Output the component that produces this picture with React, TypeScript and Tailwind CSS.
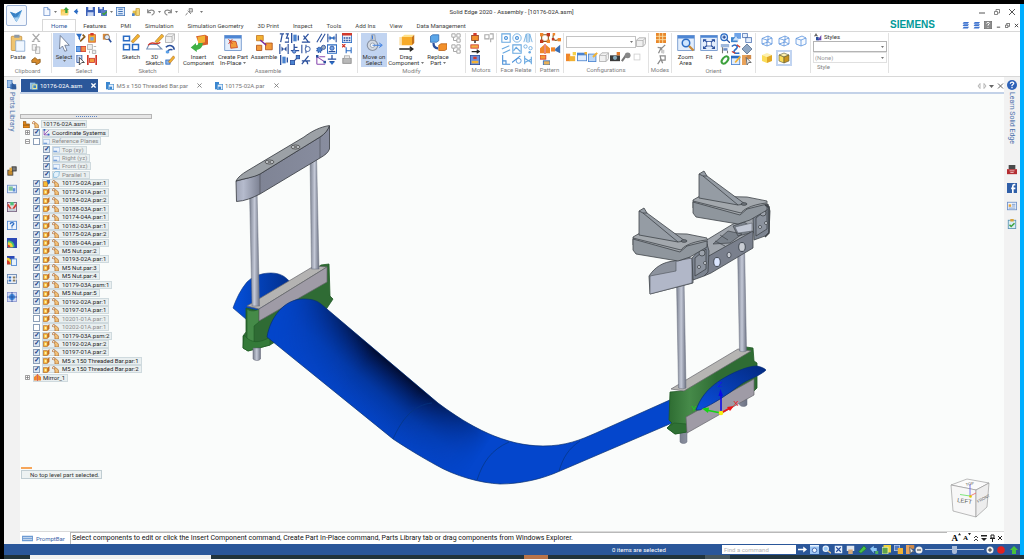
import type { ReactNode } from "react";

const BLUE = "#2b6cc4";
const NAVY = "#2a4f9c";
const GOLD = "#f2b233";
const RED = "#d2392b";
const GRAY = "#a9a9a9";

function line(d: string, stroke = BLUE, w = 1.3) {
  return <path d={d} stroke={stroke} strokeWidth={w} fill="none" />;
}

function box(x: number, y: number, w: number, h: number, fill: string, stroke = "none") {
  return <rect x={x} y={y} width={w} height={h} fill={fill} stroke={stroke} />;
}

// every glyph lives on a 12 x 12 grid
const GLYPHS: Record<string, ReactNode> = {
  newDoc: <path d="M2.500.5h5l3 3v8h-8zM7.500.5v3h3" fill="#f4f8ff" stroke="#5d86c4" />,
  open: <>{box(1, 3, 10, 8, "#f5c24a")}<path d="M1 11l2-5h9l-2 5z" fill="#fbd97a" /><path d="M5 4l3-4 4 4h-2v4H7V4z" fill="#3da13d" /></>,
  back: <path d="M9 1L3 6l6 5V8l2-2-2-2z" fill={BLUE} />,
  save: <>{box(0, 0, 12, 12, "#3d62b8")}{box(3, 0, 6, 4, "#e8eefb")}{box(2, 7, 8, 5, "#c9d7f4")}</>,
  saveAll: <>{box(0, 0, 8, 8, "#3d62b8")}{box(2, 0, 4, 3, "#e8eefb")}{box(4, 4, 8, 8, "#5b7bc9")}{line("M6 8l2 2 4-4", "#3da13d", 2)}</>,
  list: <>{box(0.5, 0.5, 11, 11, "#dfeafb", "#3a6fb5")}{line("M3 3h6M3 6h6M3 9h6", "#3a6fb5")}</>,
  palette: <>{box(1, 4, 5, 7, "#e6c14a")}{box(6, 1, 5, 10, "#f2d77c", "#b8902c")}{box(0, 8, 4, 4, "#4a83d0")}</>,
  undo: <path d="M1 2v5h5M1 7c2-5 9-5 10-1 0 3-2 4-4 5" stroke="#8b8b8b" strokeWidth="1.800" fill="none" />,
  redo: <path d="M11 2v5H6M11 7C9 2 2 2 1 6c0 3 2 4 4 5" stroke="#8b8b8b" strokeWidth="1.800" fill="none" />,
  pin: <path d="M1 11l3-4M4 4l5 5M6 1h5v5H7z" stroke="#8b8b8b" strokeWidth="1.500" fill="#ddd" />,
  cut: <path d="M2 1l7 8M10 1L3 9M1 10h3M8 10h3" stroke={GRAY} strokeWidth="1.600" fill="none" />,
  copy: <path d="M1.500.5h5v7h-5zM5.500 3.500h5v8h-5z" fill="#f1f1f1" stroke={GRAY} />,
  painter: <path d="M1 6l4-3 3 3 3-1v4L6 12V9H1z" fill="#d68a2b" stroke="#8b5c1d" />,
  filter: <><path d="M0 1h7L5 5v4L3 7V5z" fill={BLUE} />{line("M5 10l6-6M8 2l3 3", "#8b5c1d", 2)}</>,
  part: <>{box(2, 2, 8, 9, GOLD, "#d0552b")}{box(4, 0, 4, 3, RED)}{box(4, 5, 4, 4, "#6fa4e8")}</>,
  partLink: <>{box(0, 3, 6, 6, "#6fa4e8", BLUE)}{box(6, 3, 6, 6, "#f28c4a", RED)}</>,
  gray2: <path d="M.5.500h6v6h-6zM6.500 7.500h4v4h-4zM8 3h3M3 8v3" fill="#eee" stroke={GRAY} />,
  curMag: <><path d="M1 1h7v7H1z" fill="#d98a3a" /><circle cx="6" cy="5" r="3" fill="#dceafc" stroke="#8a6a4a" />{line("M8 7l3 4", NAVY, 2)}</>,
  arrowSel: <><path d="M1 0h6v9H1z" fill="#cfe0f8" stroke={NAVY} /><path d="M4 3l6 6H7l-3 3z" fill="#fff" stroke="#333" /></>,
  measure: <>{line("M1 0v12M11 0v12", RED, 2)}{box(3, 4, 6, 5, "#f29a3a", RED)}</>,
  cubeGray: <path d="M.5 4l3-3h8v7l-3 3.500h-8zM.5 4h8l3-3M8.500 4v7" fill="#f0f0f0" stroke={GRAY} />,
  sweep: <>{line("M1 4c4-4 10-2 10 3M3 11c0-4 3-5 6-4", NAVY, 1.8)}{box(1, 8, 4, 3, "#58a0e8")}</>,
  pencil: <>{box(1, 6, 5, 5, "#8fb7ea", BLUE)}<path d="M4 8l6-7 2 2-6 7z" fill={GOLD} stroke="#a05c1d" strokeWidth=".6" /></>,
  mate: <>{line("M1 1h5M4 1L2 11M8 1h3l-2 5h3v5H7", NAVY, 1.5)}</>,
  align: <>{line("M2 0v12", NAVY, 1.6)}{box(4, 2, 4, 8, "#4a83d0")}{line("M10 3v6", NAVY, 1.6)}</>,
  axial: <>{line("M1 11h10M3 8l6-7M3 3l6 8", NAVY, 1.5)}</>,
  insertRel: <>{line("M1 0v12M11 0v12", NAVY, 1.4)}<path d="M3 3l3 3-3 3zM9 3L6 6l3 3z" fill={NAVY} /></>,
  tangent: <>{line("M5 0v8M1 8h10M5 4h4", NAVY, 1.5)}<circle cx="5" cy="9" r="2" fill="#77a5e6" stroke={NAVY} /></>,
  cam: <>{line("M1 1v10M6 1v10", NAVY)}<circle cx="8" cy="6" r="3" fill="#fff" stroke={NAVY} /></>,
  connect: <>{box(0.5, 6.5, 5, 5, "#4a83d0", NAVY)}{box(7.5, 0.5, 4, 4, "#4a83d0", NAVY)}{line("M5 7l3-3", NAVY)}</>,
  angle: <>{line("M1 11L9 1M1 7h10M5 7c2 0 3 2 3 4", NAVY, 1.5)}</>,
  parallel: <>{line("M1 11L7 1M5 11l6-10", NAVY)}</>,
  distance: <>{line("M1 1v10M11 1v10M2 6h8", NAVY)}<path d="M3 3l3 3-3 3zM9 3L6 6l3 3z" fill={BLUE} /></>,
  gear: <><circle cx="4" cy="7" r="3" fill="#4a83d0" stroke={NAVY} strokeWidth="1.500" strokeDasharray="1.500 1" /><circle cx="9" cy="4" r="2.500" fill="#9ab" stroke={NAVY} /></>,
  center: <>{line("M.5 1h11v10H.5z", BLUE)}<circle cx="6" cy="5" r="2.500" fill="#77a5e6" stroke={NAVY} />{line("M2 9h8", NAVY)}</>,
  path: <>{line("M1 11h10M1 11V2l9 6M4 2h7", "#8a4bb0")}{box(0, 0, 3, 3, NAVY)}{box(9, 7, 3, 3, NAVY)}</>,
  ground: <>{line("M1 5h10M3 8h6M6 0v5", NAVY, 1.5)}<path d="M3 8h6l-3 4z" fill={BLUE} /></>,
  table: <>{box(0.5, 1.5, 11, 10, "#eaf1fb", BLUE)}{box(0, 0, 12, 3, RED)}{line("M2 6h2M5 6h2M8 6h2M2 9h2M5 9h2M8 9h2", NAVY, 1.6)}</>,
  relRed: <>{line("M5 4v7M11 4v7M5 8h6", BLUE)}{line("M0 0l4 4M4 0L0 4", RED, 1.5)}</>,
  print: <>{box(1, 4, 10, 6, "#b9b9b9", "#8b8b8b")}{box(3, 1, 6, 3, "#eee", GRAY)}</>,
  replG: <>{line("M1 1h4v4H1zM7 1h4v4H7zM7 7h4v4H7zM3 5v4h4", GRAY, 1.2)}</>,
  motor: <>{box(2, 3, 8, 6, "#f2902b", "#8b3a1d")}{box(4, 0, 4, 3, RED)}{box(5, 9, 2, 3, "#444")}</>,
  motor2: <>{box(1, 1, 9, 4, "#f2b04a", RED)}{line("M2 9h8M8 7l3 2-3 2", "#222", 1.5)}</>,
  motor3: <>{box(0.5, 0.5, 11, 11, "#6f93dd", NAVY)}{box(2, 7, 8, 3, GOLD)}{box(4, 2, 4, 3, RED)}</>,
  simG: <>{line("M1 2h5v5H1zM7 1h4v6H8v4", GRAY)}</>,
  frSquare: <>{line("M1 1h10v10H1z", "#68a8e0")}<circle cx="6" cy="6" r="2" fill="#a9cff2" stroke="#4a90d8" /></>,
  frCircle: <><circle cx="6" cy="6" r="5" fill="none" stroke="#68a8e0" /><circle cx="6" cy="6" r="2" fill="#a9cff2" stroke="#4a90d8" /></>,
  frSym: <>{line("M1 11l3-10v10M11 11L8 1v10M6 0v12", "#68a8e0", 1)}</>,
  frPar: <>{line("M1 6l9-4M2 11l9-4", "#68a8e0")}</>,
  frPlane: <>{line("M1 1h10v10H1zM2 8l3-4 5 5", "#68a8e0")}</>,
  frDots: <><circle cx="3" cy="3" r="2" fill="none" stroke="#68a8e0" /><circle cx="9" cy="5" r="2" fill="none" stroke="#68a8e0" /><circle cx="8" cy="10" r="1.500" fill="#68a8e0" /></>,
  frPerp: <>{line("M2 0v11h9M2 7h4v4", "#4a90d8")}</>,
  frTan: <>{line("M0 9l10-8", "#4a90d8")}<circle cx="8" cy="7" r="3" fill="none" stroke="#4a90d8" /></>,
  frRigid: <>{line("M2 1v10M10 2v9M2 4l8 5M2 9l8-4", "#68a8e0")}</>,
  patRect: <>{line("M2 2h8v8H2z", "#8b5c1d")}{box(0, 0, 4, 4, "#f0862b")}{box(8, 0, 4, 4, "#c4371d")}{box(0, 8, 4, 4, "#c4371d")}{box(8, 8, 4, 4, "#f0862b")}</>,
  patCurve: <>{line("M3 2C1 8 5 11 10 7", "#8b5c1d")}{box(2, 0, 3, 3, "#f0862b")}{box(1, 6, 3, 3, "#c4371d")}{box(8, 6, 4, 4, "#f0862b")}</>,
  mirror: <><path d="M5 1v10H0V5zM7 1v10h5V5z" fill="#f0862b" />{line("M6 0v12", RED)}</>,
  dup: <>{box(0, 4, 5, 5, "#f0862b")}<path d="M5 6l6-5v10L5 8z" fill="#3a6fb5" /></>,
  patTable: <>{box(0, 0, 7, 5, "#f29a3a", RED)}{box(4, 7, 8, 5, "#e8b15a", BLUE)}</>,
  cfgNew: <>{box(0, 2, 5, 9, "#f0862b")}{box(4, 5, 7, 6, GOLD)}{box(8, 0, 4, 4, "#f6d14a")}</>,
  cfgWin: <>{box(0.5, 1.5, 11, 9, "#e1edfc", "#4a83d0")}{box(0, 1, 12, 3, "#4a83d0")}{box(9, 0, 3, 3, GOLD)}</>,
  cfgEdit: <>{box(0.5, 2.5, 9, 9, "#bcd7f6", "#4a83d0")}{line("M6 6l5-5", GOLD, 2.4)}</>,
  camera: <>{box(0, 4, 12, 7, "#3b3b3b")}<circle cx="6" cy="7" r="2.500" fill="#8ab" />{box(8, 0, 4, 4, "#e07a2b")}</>,
  wrench: <>{line("M1 11l5-7", "#777", 2.6)}<circle cx="8" cy="4" r="3.500" fill="#888" /></>,
  blank: <>{box(2.5, 2.5, 7, 7, "#fff", "#cfcfcf")}</>,
  grid: <>{box(0, 0, 12, 12, "#e8872b")}{line("M0 4h12M0 8h12M4 0v12M8 0v12", "#fbe2a8", 1)}</>,
  runner: <>{line("M3 11l3-6 3 6M2 4l5 1 4-4", "#8b8b8b", 1.5)}{box(6, 7, 4, 4, "#ccc")}</>,
  robot: <>{line("M2 11l4-6 2 5M5 1h6v5H6z", "#8b8b8b", 1.5)}</>,
  zoom: <><circle cx="5" cy="5" r="4" fill="#dceafc" stroke={BLUE} strokeWidth="1.500" />{line("M8 8l4 4M3 5h4M5 3v4", NAVY, 1.5)}</>,
  pan: <>{box(4, 0, 8, 7, "#6fa4e8")}{box(0, 5, 8, 6, "#3f86d0")}<path d="M2 9l4-5 4 5z" fill="#cde2fb" /></>,
  rects: <path d="M.5.500h6v5h-6zM4.500 5.500h7v6h-7z" fill="#e4eefc" stroke="#4a70b0" />,
  tree: <>{box(1, 0, 10, 4, "#9fb8dc")}{box(4, 5, 5, 3, "#6a8cc6")}{line("M3 4v7M9 8v3", "#777")}</>,
  swirl: <>{line("M1 3c4-4 9 0 5 3s-3 6 4 5", BLUE, 2)}{line("M7 1l4 3M1 9l4 2", RED, 1.5)}</>,
  diamond: <path d="M6 0l6 6-6 6-6-6z" fill="#8ea6c4" stroke="#5c7494" />,
  rotate: <ellipse cx="6" cy="6" rx="3" ry="5" transform="rotate(40 6 6)" fill="none" stroke="#3da13d" strokeWidth="2.500" />,
  winEdit: <>{box(0.5, 1.5, 10, 10, "#e1edfc", "#4a83d0")}{box(0, 1, 11, 3, BLUE)}{line("M5 9l6-7", GOLD, 2)}</>,
  cursor: <>{box(0, 0, 5, 12, "#e8a25a")}{box(5, 0, 6, 5, "#cf8a4a")}<path d="M5 3l6 6H8l-2 3z" fill="#eee" stroke="#555" /></>,
  wire: <path d="M1 3.500L7 1l4 2v6L6 11 1 9zM1 3.500L6 5l5-2M6 5v6M7 1v6L1 9M7 7l4 2" fill="none" stroke="#5b93dd" strokeWidth=".8" />,
  wireOpen: <path d="M1 3.500L7 1l4 2v6L6 11 1 9zM1 3.500L6 5l5-2M6 5v6" fill="#f6faff" stroke="#5b93dd" strokeWidth=".8" />,
  shaded: <><path d="M1 3l5-2 5 2-5 2z" fill="#fdf0b0" /><path d="M1 3l5 2v6L1 9z" fill="#fbdc58" /><path d="M11 3L6 5v6l5-2z" fill="#e0a826" /></>,
  shadedEdge: <><path d="M1 3l5-2 5 2-5 2z" fill="#fdf0b0" stroke="#5b5b3a" strokeWidth=".6" /><path d="M1 3l5 2v6L1 9z" fill="#fbdc58" stroke="#5b5b3a" strokeWidth=".6" /><path d="M11 3L6 5v6l5-2z" fill="#c89420" stroke="#5b5b3a" strokeWidth=".6" /></>,
  style: <>{line("M1 5l2-4 2 4M1 4h4", "#333", 1)}<path d="M5 11L11 3v8z" fill="#6a49b0" />{box(3, 6, 4, 5, NAVY)}</>,
  layers: <path d="M3 0h9l-2 3H1zM3 4h9l-2 3H1zM3 8h9l-2 3H1z" fill="#3f74cf" />,
  help: <>{box(0.5, 0.5, 11, 11, "#8d8d8d", "#6e6e6e")}{line("M4 4c0-3 5-2 4 0l-2 2v1M6 9v1", "#fff", 1.5)}</>,
  library: <>{box(0, 0, 6, 9, "#9cc0ea", "#3a6fb5")}{box(4, 5, 7, 6, "#3a6fb5")}<path d="M6 11V3l5 5v3z" fill="#2f5c9c" /></>,
  asmDoc: <>{box(0, 1, 8, 10, "#9cc6ea")}{box(3, 3, 8, 8, "#e8e29a", "#5ba3d8")}{box(5, 5, 4, 4, "#3a86c4")}</>,
  parDoc: <>{box(0, 0, 6, 11, "#3a86d0")}{box(3.5, 3.5, 8, 8, "#e1edfc", "#4a90d0")}{box(5, 7, 4, 4, "#3a86d0")}</>,
  asmTree: <><path d="M0 1h5v4h6v7H0z" fill="#e88b1d" stroke="#7b4b12" />{line("M0 7h11", "#7b4b12")}</>,
  partTree: <>{box(1, 3, 7, 8, "#f7bd35", "#b0560f")}{box(3, 5, 3, 4, "#fff0ad")}<path d="M8 3l3-3v8l-3 3z" fill="#c66d1d" /></>,
  partTreeBlue: <>{box(1, 3, 7, 8, "#f7bd35", "#b0560f")}<path d="M6 0h6v5L9 8z" fill={BLUE} /></>,
  lockTree: <>{line("M1 5V2c1-2 4-2 4 1", "#b8692b")}<path d="M3 4l4-1 4 4v5H5V8z" fill="#f1c27a" stroke="#a0561c" /></>,
  coord: <>{line("M2 1v9h9M2 10l8-8", "#8a3bb0", 1.3)}{box(1, 0, 3, 3, BLUE)}{box(8, 8, 3, 3, BLUE)}</>,
  plane: <><path d="M.5 2.500h11v8H.5z" fill="#edf4fd" stroke="#8fb2df" />{line("M1 9h6", BLUE)}</>,
  planePar: <path d="M1 4l3-3h7l-1 7-3 3H1z" fill="#e4f2fb" stroke="#5aa2d0" />,
  find: <>{box(1, 5, 6, 6, "#c58a2b", "#444")}{box(6, 1, 5, 5, "#7a7a7a", "#333")}{box(3, 2, 3, 4, "#e0a53b")}</>,
  photo: <>{box(0.5, 1.5, 11, 9, "#e6eefb", "#6a8cc6")}{box(2, 3, 5, 5, "#7ec49a")}{box(7, 5, 3, 4, "#5f8fd8")}</>,
  slice: <>{box(0.5, 0.5, 11, 11, "#e7d7da", "#6b5575")}{line("M1 3l4 6M11 3L7 9", RED, 2)}{box(4, 0, 4, 4, "#4dc07a")}{box(2, 8, 8, 3, "#c3cbd6")}</>,
  helpDoc: <>{box(0.5, 1.5, 11, 10, "#eef4fc", "#4a83d0")}{line("M4 5c0-3 5-2 4 0L6 7v1M6 9v1", BLUE, 1.6)}</>,
  thermal: <>{box(0, 0, 12, 12, "#2b47b5")}<path d="M1 11V3c5 0 8 3 8 8z" fill="#46c271" /><path d="M1 11V5c4 0 6 2 6 6z" fill="#f2d33a" /><path d="M1 11V8c2 0 3 1 3 3z" fill={RED} /></>,
  thermalDoc: <>{box(0, 0, 9, 10, "#2b47b5")}<path d="M0 10V2c4 0 6 3 6 8z" fill="#f2d33a" /><path d="M0 10V5c2 0 4 2 4 5z" fill={RED} />{box(5.5, 3.5, 6, 8, "#e6f0fc", "#4a83d0")}</>,
  people: <>{box(0.5, 0.5, 11, 11, "#e8eef8", "#6480ac")}{box(2, 3, 3, 6, BLUE)}{box(7, 3, 3, 6, "#8b7a5a")}{line("M0 6h12", "#fff")}</>,
  target: <>{box(0.5, 0.5, 11, 11, "#cfd8f5", "#8b95cf")}<circle cx="6" cy="6" r="3.500" fill="#3c8be0" />{line("M6 0v12M0 6h12", NAVY, 1)}</>,
  qmark: <><circle cx="6" cy="6" r="6" fill="#2d62b8" />{line("M4 4.500c0-3 5-2 4 0L6 6.500v1M6 8.500v1.500", "#fff", 1.5)}</>,
  youtube: <>{box(2, 0, 8, 5, "#4a4a4a")}{box(0, 5, 12, 6, "#b32d31")}{line("M3 7h6M4 9h4", "#f3cdcd", 1)}</>,
  facebook: <>{box(0, 0, 12, 12, "#2f5fa8")}{line("M10 2H8.500C7 2 7 3 7 4v8M5 6.500h5", "#fff", 2)}</>,
  card: <>{box(0.5, 1.5, 11, 9, "#eef4fc", "#6b8fc8")}{box(2, 4, 3, 3, "#e5a13b")}{line("M6 4h4M6 6h4M2 8.500h8", "#6b8fc8", 1)}</>,
  clip: <>{box(1.5, 1.5, 9, 10, "#d9edf5", "#5a93b3")}{box(4, 0, 4, 3, "#d9a33b")}{line("M3 7l2 2 4-4", "#3da13d", 1.8)}</>,
  prompt: <>{box(0, 3, 12, 6, "#6d9bd3")}{line("M1 5h10M1 7h10", "#e7effa", 0.8)}</>,
  forward: <path d="M0 5h7V2l5 4-5 4V7H0z" fill="#fff" />,
  winZoom: <>{box(0, 0, 12, 12, "#9cc4f2")}<circle cx="6" cy="7" r="3" fill="#e8f3ff" stroke={NAVY} />{box(0, 0, 12, 2, "#e8f3ff")}</>,
  magWhite: <><circle cx="5" cy="5" r="3.500" fill="#9cc8f4" stroke="#e6f1fd" strokeWidth="1.500" />{line("M8 8l4 3", "#e2c08c", 2)}</>,
  fitWhite: <>{box(1, 1, 10, 10, "#e6f0fc")}{line("M3 3l6 6M9 3L3 9", NAVY, 1.5)}</>,
  hand: <><path d="M1 1h10v7H1z" fill="#e1e7ef" /><path d="M3 12V6h6v6z" fill="#d5a679" /></>,
  spin: <path d="M1 9L8 1l3 4-7 6z" fill="#4cc047" stroke="#217c2b" />,
  views: <><path d="M0 5l5-4v3h4v4H5v3z" fill="#8fc7f5" />{box(7, 8, 4, 4, "#50b060")}</>,
  yellow: <>{box(2, 0, 10, 10, "#f2d43a")}{box(0, 3, 8, 9, "#5fa34a", "#eef2c0")}</>,
  overlap: <>{box(0.5, 0.5, 7, 7, "#5078c0", "#b8cdf0")}{box(5, 4, 7, 8, "#f2b233")}</>,
};

function Icon({ name, size = "size-[10px]" }: { name: string; size?: string }) {
  return (
    <svg viewBox="0 0 12 12" className={`${size} shrink-0`} aria-hidden="true">
      {GLYPHS[name]}
    </svg>
  );
}

function Caret() {
  return (
    <svg viewBox="0 0 6 4" className="w-[3px] h-[2px] shrink-0 inline-block" aria-hidden="true">
      <path d="M0 0h6L3 4z" fill="#777" />
    </svg>
  );
}

const BIG: Record<string, ReactNode> = {
  paste: <><rect x="3" y="3" width="14" height="19" rx="1" fill="#efc46f" stroke="#c08a35" /><rect x="7" y="1" width="7" height="4" fill="#8d99a8" /><path d="M9 9h12v14H9z" fill="#f0f7ff" stroke="#7ba0cc" /></>,
  select: <path d="M7 2l12 13h-6l3 7-3 1-3-7-4 4z" fill="#fff" stroke="#5a6780" />,
  sketch: <>{line("M2 3h8v6H2zM2 14h8v7H2zM14 14h8v7h-8z", BLUE, 2)}<path d="M12 10L21 0l3 3-9 9z" fill={GOLD} stroke="#8b5c1d" strokeWidth=".6" /></>,
  sketch3d: <>{line("M1 20h20l-6-6H4z", "#7a94b8", 1.6)}{line("M3 15c5-8 10 2 16-4", RED, 1.8)}<path d="M12 10L21 0l3 3-9 9z" fill={GOLD} stroke="#8b5c1d" strokeWidth=".6" /></>,
  insert: <><path d="M8 3l12-2 4 2v11l-11 2z" fill="#d8602b" /><path d="M10 4l10-2v9l-9 2z" fill={GOLD} /><path d="M17 12c0 6-4 9-8 9v3l-8-6 7-6v3c2 0 3-1 3-3z" fill="#3fb045" /></>,
  create: <><rect x="1" y="2" width="22" height="20" fill="#e3eefc" stroke="#5c86c4" /><path d="M1 2h22v4H1z" fill="#4d86d4" /><path d="M8 9l8 1 2 8-9 1z" fill="#f29a3a" stroke="#c4371d" />{line("M6 7l5 6M11 7l-5 6", RED)}</>,
  assemble: <><path d="M2 2h9v7H2z" fill={GOLD} stroke="#bd6d18" /><path d="M2 15h7v7H2zM14 12h9v9h-9z" fill="#f29a3a" stroke="#a9480f" />{line("M7 8l8 7", "#7a2b9b", 2)}</>,
  move: <><circle cx="10" cy="15" r="7" fill="#d3d9e2" stroke="#8a94a5" strokeWidth="1.500" /><circle cx="10" cy="15" r="3" fill="#f4f7fb" stroke="#8a94a5" /><path d="M8 8l1-7h4l1 8z" fill="#c4ccd8" stroke="#8a94a5" />{line("M10 15h12M19 12l4 3-4 3M10 2v5", "#3b7ce0", 1.3)}</>,
  drag: <><path d="M6 4l4-3h13l-3 3z" fill="#ffe18b" /><path d="M6 4h14v11H6z" fill="#f7ab2a" /><path d="M20 4l3-3v11l-3 3z" fill="#c4731c" /><path d="M3 4h3v11H3z" fill="#fbe3b0" />{line("M3 20h17M17 17l4 3-4 3", "#222", 2)}</>,
  replace: <><path d="M2 3l3-2h8v8l-3 2H2z" fill="#5ba6e8" stroke="#2a66ad" /><path d="M13 15l3-2h8v7l-3 2h-8z" fill="#f2902b" stroke="#b85b12" />{line("M6 12c0 5 2 7 6 7", NAVY, 3)}</>,
  zoomArea: <><rect x="1" y="2" width="22" height="20" fill="#e3eefc" stroke="#5c86c4" /><path d="M1 2h22v4H1z" fill="#4d86d4" /><circle cx="12" cy="12" r="5" fill="#cfe6ff" stroke={BLUE} strokeWidth="2" />{line("M16 16l6 6", "#c98a3a", 3)}</>,
  fit: <><rect x="1" y="2" width="22" height="20" fill="#e3eefc" stroke="#5c86c4" /><path d="M1 2h22v3H1z" fill="#4d86d4" />{line("M6 8l12 10M18 8L6 18", NAVY, 1.6)}<rect x="9" y="10" width="6" height="6" fill="#fff" stroke={NAVY} /><path d="M4 7h5l-5 4zM20 7h-5l5 4zM4 20h5l-5-4zM20 20h-5l5-4z" fill={NAVY} /></>,
};

type BigProps = { icon: string; lines: string[]; width: string; active?: boolean; menu?: boolean };

function BigButton({ icon, lines, width, active, menu }: BigProps) {
  return (
    <button
      className={`${width} h-[34px] shrink-0 flex flex-col items-center text-[6px] leading-[6px] ${active ? "bg-[#c1d4f1]" : ""}`}
    >
      <svg viewBox="0 0 24 24" className="size-[18px] mt-px mb-[2px]" aria-hidden="true">{BIG[icon]}</svg>
      {lines.map((l, i) => (
        <span key={l} className="whitespace-nowrap">
          {l}
          {menu && i === lines.length - 1 && lines.length > 1 && <> <Caret /></>}
        </span>
      ))}
      {menu && lines.length === 1 && <Caret />}
    </button>
  );
}

// icons run down each column, three to a column
function SmallGrid({ cols, gap = "gap-x-px" }: { cols: string[][]; gap?: string }) {
  return (
    <div className={`flex ${gap}`}>
      {cols.map((col, i) => (
        <div key={i} className="flex flex-col gap-px">
          {col.map((n, j) => (
            <button key={j} aria-label={n} className="size-[10px] flex">
              <Icon name={n} />
            </button>
          ))}
        </div>
      ))}
    </div>
  );
}

function Group({ label, width, children }: { label: string; width: string; children: ReactNode }) {
  return (
    <section className={`${width} shrink-0 flex flex-col justify-between border-r border-[#e2e2e2]`}>
      <div className="flex px-px h-[34px]">{children}</div>
      <div className="text-center text-[6px] leading-[7px] text-[#808080] whitespace-nowrap">{label}</div>
    </section>
  );
}

function Ribbon() {
  return (
    <div className="flex h-[46px] pt-px pb-[3px] border-y border-[#d8d8d8] overflow-hidden">
      <Group label="Clipboard" width="w-[48px]">
        <BigButton icon="paste" lines={["Paste"]} width="w-[26px]" />
        <SmallGrid cols={[["cut", "copy", "painter"]]} />
      </Group>
      <Group label="Select" width="w-[65px]">
        <BigButton icon="select" lines={["Select"]} width="w-[22px]" active menu />
        <div className="flex pl-px gap-x-[5px]">
          <SmallGrid cols={[["filter", "partLink", "arrowSel"], ["part", "gray2", "measure"]]} />
          <SmallGrid cols={[["curMag"]]} />
        </div>
      </Group>
      <Group label="Sketch" width="w-[62px]">
        <BigButton icon="sketch" lines={["Sketch"]} width="w-[26px]" />
        <BigButton icon="sketch3d" lines={["3D", "Sketch"]} width="w-[21px]" />
        <SmallGrid cols={[["cubeGray", "sweep", "pencil"]]} />
      </Group>
      <Group label="Assemble" width="w-[179px]">
        <BigButton icon="insert" lines={["Insert", "Component"]} width="w-[37px]" />
        <BigButton icon="create" lines={["Create Part", "In-Place"]} width="w-[32px]" menu />
        <BigButton icon="assemble" lines={["Assemble"]} width="w-[30px]" />
        <div className="flex gap-x-[5px]">
          <SmallGrid cols={[["mate", "insertRel", "align"], ["align", "tangent", "connect"], ["axial", "cam", "angle"]]} />
          <SmallGrid cols={[["parallel", "gear", "path"], ["distance", "center", "ground"]]} />
          <SmallGrid cols={[["table", "relRed", "print"]]} />
        </div>
      </Group>
      <Group label="Modify" width="w-[108px]">
        <div className="pl-[2px] flex">
          <BigButton icon="move" lines={["Move on", "Select"]} width="w-[26px]" active />
          <BigButton icon="drag" lines={["Drag", "Component"]} width="w-[38px]" menu />
          <BigButton icon="replace" lines={["Replace", "Part"]} width="w-[26px]" menu />
          <SmallGrid cols={[["replG", "replG"]]} />
        </div>
      </Group>
      <Group label="Motors" width="w-[31px]">
        <div className="pl-[3px]">
          <SmallGrid cols={[["motor", "motor2", "motor3"], ["simG"]]} gap="gap-x-1" />
        </div>
      </Group>
      <Group label="Face Relate" width="w-[39px]">
        <div className="pl-[3px]">
          <SmallGrid cols={[["frSquare", "frPar", "frPerp"], ["frCircle", "frPlane", "frTan"], ["frSym", "frDots", "frRigid"]]} />
        </div>
      </Group>
      <Group label="Pattern" width="w-[28px]">
        <div className="pl-[3px]">
          <SmallGrid cols={[["patRect", "mirror", "patTable"], ["patCurve", "dup"]]} />
        </div>
      </Group>
      <Group label="Configurations" width="w-[85px]">
        <div className="flex flex-col gap-[4px] px-px pt-[3px]">
          <div className="flex items-center gap-px">
            <select aria-label="Configuration" className="w-[70px] h-[12px] border border-[#c4c4c4] bg-white appearance-none" />
            <span className="-ml-[7px] mr-[2px] flex"><Caret /></span>
            <Icon name="cubeGray" />
          </div>
          <div className="flex gap-px">
            {["cfgNew", "cfgWin", "cfgEdit", "cubeGray", "camera", "wrench", "blank"].map((n) => (
              <button key={n} aria-label={n} className="size-[10px] flex"><Icon name={n} /></button>
            ))}
          </div>
        </div>
      </Group>
      <Group label="Modes" width="w-[23px]">
        <div className="pl-[6px]">
          <SmallGrid cols={[["grid", "runner", "robot"]]} />
        </div>
      </Group>
      <Group label="Orient" width="w-[84px]">
        <BigButton icon="zoomArea" lines={["Zoom", "Area"]} width="w-[25px]" />
        <BigButton icon="fit" lines={["Fit"]} width="w-[22px]" />
        <SmallGrid cols={[["zoom", "tree", "rotate"], ["pan", "swirl", "winEdit"], ["rects", "diamond", "cursor"]]} />
      </Group>
      <Group label="" width="w-[55px]">
        <div className="grid grid-cols-3 gap-x-px pl-[2px]">
          {["wire", "wire", "wireOpen", "shaded", "shadedEdge"].map((n, i) => (
            <button
              key={i}
              aria-label={`View style ${i + 1}`}
              className={`size-[16px] flex items-center justify-center ${n === "shadedEdge" ? "border-2 border-[#c1d4f1]" : ""}`}
            >
              <Icon name={n} size="size-[12px]" />
            </button>
          ))}
        </div>
      </Group>
      <Group label="" width="w-[78px]">
        <div className="flex flex-col text-[6px] leading-[8px] pl-px flex-1">
          <label htmlFor="style" className="flex items-center gap-[2px] h-[10px] pl-px"><Icon name="style" size="size-[8px]" />Styles</label>
          <div className="flex items-center">
            <select id="style" className="w-full h-[11px] border border-[#b4b4b4] bg-white appearance-none" />
            <span className="-ml-[6px] mr-[3px] flex"><Caret /></span>
          </div>
          <div className="flex items-center">
            <select aria-label="Override" className="w-full h-[11px] border border-[#e0e0e0] bg-white appearance-none text-[#9a9a9a] px-px">
              <option>(None)</option>
            </select>
            <span className="-ml-[6px] mr-[3px] flex"><Caret /></span>
          </div>
          <div className="text-[#808080] pl-1">Style</div>
        </div>
      </Group>
    </div>
  );
}

const TABS = ["Features", "PMI", "Simulation", "Simulation Geometry", "3D Print", "Inspect", "Tools", "Add Ins", "View", "Data Management"];

function Header() {
  return (
    <header className="flex h-[27px]">
      <button aria-label="Application menu" className="size-[21px] ml-[2px] mt-px shrink-0 border border-[#9db3d6] rounded-[2px] bg-[#f3f7fd] flex items-center justify-center">
        <svg viewBox="0 0 16 16" className="size-[15px]" aria-hidden="true">
          <path d="M1 4l6 2 7-4-3 8-3 5-3-5z" fill="#62a8e0" />
          <path d="M1 4l6 2 1 9-3-5zM7 6l7-4-6 8z" fill="#3880c4" />
          <path d="M5 10l6 0-3 5z" fill="#a8d0f0" />
        </svg>
      </button>
      <div className="flex-1 flex flex-col justify-between">
        <div className="flex items-center h-[15px]">
          <div className="w-[176px] flex items-center gap-[3px] pl-[15px]">
            <Icon name="newDoc" size="size-[9px]" /><Caret />
            <Icon name="open" size="size-[9px]" />
            <Icon name="back" size="size-[7px]" />
            <span className="w-px" />
            <Icon name="save" size="size-[9px]" />
            <Icon name="saveAll" size="size-[9px]" /><Caret />
            <Icon name="list" size="size-[9px]" />
            <span className="w-px" />
            <Icon name="palette" size="size-[8px]" />
            <span className="w-px" />
            <Icon name="undo" size="size-[8px]" /><Caret />
            <Icon name="redo" size="size-[8px]" /><Caret />
            <span className="w-px" />
            <Icon name="pin" size="size-[8px]" />
            <span className="w-px" />
            <Caret />
          </div>
          <h1 className="flex-1 text-center text-[6px]">Solid Edge 2020 - Assembly - [10176-02A.asm]</h1>
          <div className="w-[200px] flex justify-end gap-[9px] pr-[5px] text-[#555]">
            <button aria-label="Minimize"><svg viewBox="0 0 6 6" className="size-[6px]"><path d="M0 4h6" stroke="#555" /></svg></button>
            <button aria-label="Restore"><svg viewBox="0 0 6 6" className="size-[6px]"><path d="M.5 2.500h3v3h-3zM2 2V.5h3.500V4H4" stroke="#555" fill="none" strokeWidth=".7" /></svg></button>
            <button aria-label="Close"><svg viewBox="0 0 6 6" className="size-[6px]"><path d="M0 0l6 6M6 0L0 6" stroke="#555" /></svg></button>
          </div>
        </div>
        <nav className="flex items-center h-[12px] text-[6px] text-[#444]">
          <button className="ml-[15px] h-full px-2 border border-b-0 border-[#d8d8d8] text-[#2b579a] flex items-center">Home</button>
          {TABS.map((t) => (
            <button key={t} className="px-[7px] whitespace-nowrap">{t}</button>
          ))}
          <div className="ml-auto flex items-center gap-1 pr-px">
            <span className="font-['Liberation_Sans',sans-serif] font-bold text-[10px] leading-[10px] text-[#009999] mr-[23px]">SIEMENS</span>
            <Icon name="layers" size="size-[7px]" />
            <Icon name="layers" size="size-[7px]" />
            <Icon name="help" size="size-[8px]" />
            <svg viewBox="0 0 6 6" className="size-[5px]"><path d="M1 5h4" stroke="#333" /></svg>
            <svg viewBox="0 0 6 6" className="size-[5px]"><path d="M.5 2.500h3v3h-3zM2 2V.5h3.500V4H4" stroke="#333" fill="none" strokeWidth=".8" /></svg>
            <svg viewBox="0 0 6 6" className="size-[5px]"><path d="M1 1l4 4M5 1L1 5" stroke="#333" /></svg>
          </div>
        </nav>
      </div>
    </header>
  );
}

function DocTab({ name, icon, active }: { name: string; icon: string; active?: boolean }) {
  return (
    <div className={`flex items-center h-full gap-[2px] ${active ? "bg-[#2b579a] text-white pl-[9px] pr-[2px] mr-[8px]" : "text-[#777] mr-[13px]"}`}>
      <Icon name={icon} size="size-[8px]" />
      <span className="whitespace-nowrap">{name}</span>
      <button aria-label={`Close ${name}`} className="ml-[7px]">
        <svg viewBox="0 0 6 6" className="size-[5px]"><path d="M.5.5l5 5M5.500.5l-5 5" stroke="currentColor" strokeWidth={active ? 1.6 : 1} /></svg>
      </button>
    </div>
  );
}

function DocTabs() {
  return (
    <div className="flex items-center h-[17px] pt-[2px] pl-px border-b-2 border-[#c3d2e8] text-[6px] bg-white">
      <DocTab name="10176-02A.asm" icon="asmDoc" active />
      <DocTab name="M5 x 150 Threaded Bar.par" icon="parDoc" />
      <DocTab name="10175-02A.par" icon="parDoc" />
      <svg viewBox="0 0 30 8" className="w-[30px] h-[8px] ml-auto">
        <path d="M6 1.500L4 4l2 2.500zM10 1.500L12 4l-2 2.500z" fill="none" stroke="#999" strokeWidth=".7" />
        <path d="M15 3h5l-2.500 3z" fill="#666" />
        <path d="M24 1.500l5 5M29 1.500l-5 5" stroke="#666" />
      </svg>
    </div>
  );
}

type Row = { name: string; kind: "sub" | "plane" | "part" | "mirror"; icon: string; off?: boolean; dim?: boolean; open?: boolean };

function part(name: string, off = false): Row {
  return { name, kind: "part", icon: "partTree", off, dim: off };
}

const ROWS: Row[] = [
  { name: "Coordinate Systems", kind: "sub", icon: "coord" },
  { name: "Reference Planes", kind: "sub", icon: "plane", off: true, dim: true, open: true },
  { name: "Top (xy)", kind: "plane", icon: "plane", dim: true },
  { name: "Right (yz)", kind: "plane", icon: "plane", dim: true },
  { name: "Front (xz)", kind: "plane", icon: "plane", dim: true },
  { name: "Parallel 1", kind: "plane", icon: "planePar", dim: true },
  { ...part("10175-02A.par:1"), icon: "partTreeBlue" },
  part("10173-01A.par:1"),
  part("10184-02A.par:2"),
  part("10188-03A.par:1"),
  part("10174-04A.par:1"),
  part("10182-03A.par:1"),
  part("10175-02A.par:2"),
  part("10189-04A.par:1"),
  part("M5 Nut.par:2"),
  part("10193-02A.par:1"),
  part("M5 Nut.par:3"),
  part("M5 Nut.par:4"),
  part("10179-03A.psm:1"),
  part("M5 Nut.par:5"),
  part("10192-02A.par:1"),
  part("10197-01A.par:1"),
  part("10201-01A.par:1", true),
  part("10202-01A.par:1", true),
  part("10179-03A.psm:2"),
  part("10192-02A.par:2"),
  part("10197-01A.par:2"),
  part("M5 x 150 Threaded Bar.par:1"),
  part("M5 x 150 Threaded Bar.par:2"),
  { name: "Mirror_1", kind: "mirror", icon: "mirror" },
];

const INDENT = { sub: "pl-[5px]", plane: "pl-[23px]", part: "pl-[13px]", mirror: "pl-[5px]" };
const CHECK =
  "appearance-none size-[7px] shrink-0 border border-[#8c9fb8] bg-white checked:bg-[#dce6f2] checked:before:content-['✓'] checked:before:text-[#1c4587] before:block before:text-[7px] before:leading-[5px] before:font-bold before:text-center";

function TreeRow({ row }: { row: Row }) {
  const expandable = row.kind === "sub" || row.kind === "mirror";
  return (
    <li className={`flex items-center gap-[2px] min-h-0 ${INDENT[row.kind]}`}>
      {expandable && (
        <svg viewBox="0 0 5 5" className="size-[5px] shrink-0 mr-px">
          <path d={row.open ? "M.5.500h4v4h-4zM1 2.500h3" : "M.5.500h4v4h-4zM1 2.500h3M2.500 1v3"} fill="#fff" stroke="#777" strokeWidth=".7" />
        </svg>
      )}
      {row.kind !== "mirror" && <input type="checkbox" aria-label={row.name} defaultChecked={!row.off} className={CHECK} />}
      <span className={`flex items-center gap-[2px] h-[8px] pr-[2px] border border-[#cfdade] bg-[#e9eff0] whitespace-nowrap ${row.dim ? "text-[#8b8b8b]" : "text-[#1e1e1e]"}`}>
        <Icon name={row.icon} size="size-[7px]" />
        {row.kind === "part" && <Icon name="lockTree" size="size-[7px]" />}
        <span className={row.kind === "part" ? "pl-px" : ""}>{row.name}</span>
      </span>
    </li>
  );
}

function PathFinder() {
  return (
    <div className="absolute left-0 top-[20px] text-[6px] leading-[6px]">
      <div className="w-[132px] h-[5px] border border-[#b5b5b5] bg-[#e6e6e6] flex items-center justify-center">
        <span className="w-[21px] border-t border-dotted border-[#5b86c8]" />
      </div>
      <ul className="grid grid-rows-[repeat(31,minmax(0,1fr))] h-[262px] mt-px">
        <li className="flex items-center gap-[2px] pl-[3px]">
          <Icon name="asmTree" size="size-[7px]" />
          <Icon name="lockTree" size="size-[7px]" />
          <span className="h-[8px] px-px border border-[#cfdade] bg-[#e9eff0]">10176-02A.asm</span>
        </li>
        {ROWS.map((r) => (
          <TreeRow key={r.name} row={r} />
        ))}
      </ul>
    </div>
  );
}

const TUBE =
  "M267 337C270 318 284 299 303 299C311 299 316 300 321 304L438 403C470 427 505 446 543 446C566 446 580 440 596 433L672 399V423L560 471C540 480 518 484 500 484C480 483 455 476 436 465C425 459 408 449 393 439Z";

function Bracket() {
  return (
    <g stroke="#3f4449" strokeWidth=".8" strokeLinejoin="round">
      <path d="M633 237L640 233L687 234L707 238V245L684 254L633 245Z" fill="#a3a8ad" />
      <path d="M633 239L680 252L687 246L707 241V247L690 257L678 261L636 254L633 250Z" fill="#8f969d" />
      <path d="M633 238L681 250C683 247 690 242 706 240" fill="none" />
      <path d="M639 211L644 208L647 213L685 241L678 242L639 235Z" fill="#959ca4" />
      <path d="M639 211L643 213L678 242M643 213L647 213" fill="none" />
      <ellipse cx="684" cy="241" rx="3" ry="1.300" fill="#70767d" />
    </g>
  );
}

function Hinge() {
  return (
    <g stroke="#3f4449" strokeWidth=".8" strokeLinejoin="round">
      <path d="M692 258L698 251L707 244L709 251L708 272L704 276L693 280Z" fill="#7c8490" />
      <path d="M695 258L706 249V269L695 276Z" fill="#8b929d" />
      <circle cx="699" cy="267" r="1.500" fill="#d5dae2" />
      <circle cx="705" cy="263" r="1.500" fill="#d5dae2" />
      <circle cx="702" cy="253" r="3" fill="#9da3ac" />
    </g>
  );
}

function Model() {
  return (
    <svg viewBox="20 94 984 437" className="absolute inset-0 size-full" role="img" aria-label="Assembly model">
      <defs>
        <linearGradient id="rod"><stop offset="0" stopColor="#7c8291" /><stop offset=".5" stopColor="#c3c8d6" /><stop offset="1" stopColor="#6d7384" /></linearGradient>
        <linearGradient id="steel"><stop offset="0" stopColor="#a2a7b8" /><stop offset=".08" stopColor="#b5bbcd" /><stop offset=".25" stopColor="#7f8495" /><stop offset="1" stopColor="#888d9f" /></linearGradient>
        <linearGradient id="green"><stop offset="0" stopColor="#2c6a30" /><stop offset=".25" stopColor="#468a49" /><stop offset=".55" stopColor="#2f6c34" /><stop offset="1" stopColor="#2f6c34" /></linearGradient>
        <linearGradient id="fin" x1="0" y1="1" x2="1" y2="0"><stop offset="0" stopColor="#0a4fe0" /><stop offset="1" stopColor="#032a80" /></linearGradient>
        <linearGradient id="tail"><stop offset="0" stopColor="#0450dc" /><stop offset="1" stopColor="#022f8c" /></linearGradient>
        <linearGradient id="shade" gradientUnits="userSpaceOnUse" x1="380" y1="354" x2="332" y2="412">
          <stop offset="0" stopColor="#010c30" />
          <stop offset=".15" stopColor="#021a58" stopOpacity=".9" />
          <stop offset=".4" stopColor="#03308c" stopOpacity=".65" />
          <stop offset=".75" stopColor="#043cae" stopOpacity=".3" />
          <stop offset="1" stopColor="#0446cc" stopOpacity="0" />
        </linearGradient>
        <linearGradient id="along" gradientUnits="userSpaceOnUse" x1="290" y1="300" x2="490" y2="440">
          <stop offset="0" stopColor="#fff" stopOpacity=".1" />
          <stop offset=".4" stopColor="#fff" />
          <stop offset=".65" stopColor="#fff" />
          <stop offset="1" stopColor="#fff" stopOpacity="0" />
        </linearGradient>
        <mask id="fade" maskUnits="userSpaceOnUse" x="250" y="280" width="430" height="220">
          <rect x="250" y="280" width="430" height="220" fill="url(#along)" />
        </mask>
      </defs>

      <path d="M233 308C236 299 241 289 247 282C254 275 264 273 271 273C279 273 285 276 289 281L290 300L247 320Z" fill="url(#tail)" stroke="#0a327c" strokeWidth=".6" />

      <path d="M321 265L329 264L330 296L333 299L325 311L270 345L248 351L243 348V336L246 332V308L259 311Z" fill="#2f6b34" stroke="#1f5a25" strokeWidth=".8" />
      <path d="M247 309C251 312 256 311 259 309V322L254 326V344L247 342Z" fill="#458a48" stroke="#1f5a25" strokeWidth=".6" />
      <path d="M244 335C252 345 262 342 270 337L270 345L248 351L243 348Z" fill="#347a39" stroke="#1f5a25" strokeWidth=".6" />
      <path d="M253 348h7.500v11c-2 2-5 2-7.500 0z" fill="url(#rod)" stroke="#5c6170" strokeWidth=".5" />
      <path d="M247 306L314 266L327 267L259 309Z" fill="#b4b3b2" stroke="#66666b" strokeWidth=".7" />
      <path d="M259 309L327 267V282L259 321Z" fill="#9f9ba6" stroke="#66666b" strokeWidth=".7" />
      <path d="M310 155L316.500 155L319 269H311.500Z" fill="url(#rod)" stroke="#676d7c" strokeWidth=".5" />
      <path d="M249.500 190L257 190L259.500 306H252Z" fill="url(#rod)" stroke="#676d7c" strokeWidth=".5" />
      <path d="M236 181C248 178 252 177 260 174L320 137C326 133 328 129 329.500 126V149C328 153 325 155 320 158L260 194C252 198 245 201 236.500 201.500Z" fill="url(#steel)" stroke="#35383f" strokeWidth=".8" />
      <path d="M236 181C238 177 242 174 247 171L304 137C312 131 320 127 329.500 125.500C328 130 325 134 320 137L260 174C252 178 246 178 236 181Z" fill="#9ca1a6" stroke="#35383f" strokeWidth=".8" />
      <path d="M260 174V194M320 137V158" stroke="#474a52" strokeWidth=".6" />
      <ellipse cx="269.500" cy="162" rx="4.500" ry="2" fill="#b9bdc1" stroke="#333" strokeWidth=".7" />
      <ellipse cx="295.500" cy="147" rx="4.500" ry="2" fill="#b9bdc1" stroke="#333" strokeWidth=".7" />
      <path d="M268 162h3M294 147h3" stroke="#333" />

      <path d={TUBE} fill="#0446cc" />
      <path d={TUBE} fill="url(#shade)" mask="url(#fade)" />
      <path d={TUBE} fill="none" stroke="#0a3070" strokeWidth=".7" />
      <path d="M393 439C402 419 413 405 432 403M477 480C483 462 491 450 509 442M559 471C563 458 568 449 580 441" stroke="#06357f" strokeWidth=".7" fill="none" />

      <path d="M739.500 396h7.500v9c-2 2-5 2-7.500 0zM680 430h7v12c-2 2-5 2-7 0z" fill="url(#rod)" stroke="#676d7c" strokeWidth=".5" />
      <path d="M670 392L683 391L746 347L753 348L754 361L757 363V388L754 391L687 423L686 432L675 434L667 428L672 423L669 420Z" fill="url(#green)" stroke="#1f5a25" strokeWidth=".8" />
      <path d="M667 428L674 423L687 424V432L675 434Z" fill="#2f7034" stroke="#1f5a25" strokeWidth=".6" />
      <path d="M671 389L738 349L751 351L684 391Z" fill="#b6b5b3" stroke="#66666b" strokeWidth=".7" />
      <path d="M686 417L754 379V395L687 433Z" fill="#9f9ba6" stroke="#66666b" strokeWidth=".7" />
      <path d="M676.500 280h7.500L686 388C684 389 681 389 678.500 388Z" fill="url(#rod)" stroke="#676d7c" strokeWidth=".5" />
      <path d="M737.500 245h7L746.500 351C744 352 742 352 739.500 351Z" fill="url(#rod)" stroke="#676d7c" strokeWidth=".5" />
      <path d="M696 410C700 399 706 390 719 381C733 372 748 366 757 366C761 367 764 368 766 370C760 376 748 379 740 385C727 395 715 403 700 410Z" fill="url(#fin)" stroke="#062c78" strokeWidth=".7" />

      <path d="M705 241L733 224L765 212V225L753 233L708 262Z" fill="#a1a6ad" stroke="#3f4449" strokeWidth=".8" />
      <path d="M713 244L728 231L742 234L730 243ZM720 235l8 5M715 241l10 5M733 226L744 222L750 226V233L738 236Z" fill="#7b828b" stroke="#3f4449" strokeWidth=".7" />
      <path d="M735 227L752 223V231L738 233Z" fill="#c2c8d5" stroke="#4d525a" strokeWidth=".5" />
      <path d="M707 257L753 231V248L711 273L704 276Z" fill="#7a808d" stroke="#3f4449" strokeWidth=".8" />
      <ellipse cx="717" cy="262" rx="3.300" ry="4.500" fill="#dbe6ff" stroke="#414852" />
      <ellipse cx="729" cy="255" rx="2" ry="2.800" fill="#c9cdd4" stroke="#414852" strokeWidth=".8" />
      <ellipse cx="742" cy="247" rx="3.300" ry="4.500" fill="#c9cdd4" stroke="#414852" />
      <path d="M649 276C655 267 663 262 674 261L688 256L693 260V283L650 294Z" fill="#8d939e" stroke="#3f4449" strokeWidth=".8" />
      <path d="M650 276L676 271V261L692 258V283L650 294Z" fill="#b1b7c8" stroke="#4b5057" strokeWidth=".6" />
      <g transform="translate(61 -40)"><Hinge /></g>
      <g transform="translate(60 -37)"><Bracket /></g>
      <Hinge />
      <Bracket />
      <path d="M765 205l4 2v26l-4 4" fill="none" stroke="#3f4449" strokeWidth="1.500" />

      <g strokeWidth="1.600" fill="none">
        <path d="M721 413V394" stroke="#0a0ae6" />
        <path d="M721 413L706 410" stroke="#14d414" />
        <path d="M721 413L730 408" stroke="#f01414" />
      </g>
      <path d="M718.500 396L720.500 389L723 396Z" fill="#0a0ae6" />
      <path d="M702 408.500L709 407.500L708 413Z" fill="#14d414" />
      <path d="M734 406L727 407L730 411Z" fill="#f01414" />
      <circle cx="721" cy="413" r="2.300" fill="#f4ee16" />
      <g className="font-['Liberation_Sans',sans-serif]" fontSize="8" textAnchor="middle">
        <text x="720" y="387" fill="#1414f0">Z</text>
        <text x="694" y="411" fill="#14d414">Y</text>
        <text x="736" y="406" fill="#f01414">X</text>
      </g>

      <g stroke="#8e8e8e" strokeWidth=".6" fill="#fbfbfb">
        <path d="M951 485L967 479L989 483L976 490Z" />
        <path d="M951 485L976 490V517L953 511Z" fill="#f7f7f7" />
        <path d="M976 490L989 483L987 507L976 517Z" fill="#ededed" />
      </g>
      <path d="M970 496V484" stroke="#5a5af0" strokeWidth=".8" />
      <path d="M970 496L960 494.500" stroke="#60e060" strokeWidth=".8" />
      <path d="M970 496L976 493" stroke="#f06060" strokeWidth=".8" />
      <circle cx="970.500" cy="496.500" r="1.300" fill="#dcc800" />
      <g className="font-['Liberation_Sans',sans-serif]" fill="#555">
        <text x="957" y="502" fontSize="6" transform="rotate(8 957 502)">LEFT</text>
        <text x="978" y="503" fontSize="4" transform="rotate(-28 978 503)">FRONT</text>
        <text x="966" y="486" fontSize="4" transform="rotate(-10 966 486)">TOP</text>
      </g>
    </svg>
  );
}

function PromptBar() {
  return (
    <div className="flex items-center h-[13px] border-t border-[#dadada] bg-white">
      <div className="flex items-center gap-[3px] pl-[2px] w-[50px] text-[6px] text-[#3c64a8]">
        <Icon name="prompt" size="size-[11px]" />PromptBar
      </div>
      <p className="flex-1 h-full border-l border-t border-[#b9b9b9] pl-px text-[7px] leading-[11px] text-[#111] whitespace-nowrap overflow-hidden">
        Select components to edit or click the Insert Component command, Create Part In-Place command, Parts Library tab or drag components from Windows Explorer.
      </p>
      <div className="flex items-center gap-[2px] pl-[4px] pr-px text-black font-['Liberation_Serif',serif] font-bold">
        <button aria-label="Larger text" className="flex text-[9px] leading-[10px]">
          A
          <svg viewBox="0 0 4 4" className="size-[3px]"><path d="M0 3l2-3 2 3z" fill="#222" /></svg>
        </button>
        <button aria-label="Smaller text" className="flex text-[7px] leading-[10px]">
          A
          <svg viewBox="0 0 4 4" className="size-[3px]"><path d="M0 0l2 3 2-3z" fill="#222" /></svg>
        </button>
        <svg viewBox="0 0 30 8" className="w-[30px] h-[8px]">
          <path d="M1 4l2-2 2 2M1 7l2-2 2 2" fill="none" stroke="#222" strokeWidth=".9" />
          <path d="M8 1h6v1.500H8zM8 4h6l-3 3z" fill="#222" />
          <path d="M18 1h3v3h-3zM17 4.500h5M19.500 4.500V8" fill="none" stroke="#222" />
          <path d="M25 2l4 4M29 2l-4 4" stroke="#222" />
        </svg>
      </div>
    </div>
  );
}

function SideBar({ top, label, icons, gap }: { top: string; label: string; icons: string[]; gap: string }) {
  return (
    <aside className="w-[16px] shrink-0 bg-[#f2f2f2] flex flex-col items-center pt-[3px] overflow-hidden">
      <Icon name={top} />
      <button className={`[writing-mode:vertical-rl] text-[7px] leading-[8px] text-[#4c70ab] mt-[2px] whitespace-nowrap h-[50px] text-left shrink-0 ${gap}`}>{label}</button>
      <div className="flex flex-col gap-2">
        {icons.map((n) => (
          <button key={n} aria-label={n} className="flex"><Icon name={n} /></button>
        ))}
      </div>
    </aside>
  );
}

function StatusBar() {
  return (
    <footer className="flex items-center h-[11px] bg-[#2b579a] text-white text-[6px] leading-[8px]">
      <span className="flex-1" />
      <span className="w-[110px]">0 items are selected</span>
      <input aria-label="Find a command" placeholder="Find a command" className="w-[74px] h-[9px] bg-white px-[2px] placeholder:text-[#b4b4b4]" />
      <div className="flex items-center gap-[3px] pl-[2px]">
        {["forward", "winZoom", "magWhite", "fitWhite", "hand", "spin", "views", "yellow", "overlap", "cursor"].map((n) => (
          <button key={n} aria-label={n} className="flex"><Icon name={n} size="size-[9px]" /></button>
        ))}
      </div>
      <svg viewBox="0 0 8 8" className="size-[8px]"><circle cx="4" cy="4" r="3.500" fill="#eee" /><path d="M2 4h4" stroke="#333" /></svg>
      <input
        type="range"
        aria-label="Zoom"
        defaultValue={50}
        className="appearance-none w-[59px] h-px mx-[2px] bg-[#b9c9e2] [&::-webkit-slider-thumb]:appearance-none [&::-webkit-slider-thumb]:w-[5px] [&::-webkit-slider-thumb]:h-[8px] [&::-webkit-slider-thumb]:bg-[#a9bbd8] [&::-webkit-slider-thumb]:rounded-b-[2px]"
      />
      <svg viewBox="0 0 8 8" className="size-[8px]"><circle cx="4" cy="4" r="3.500" fill="#eee" /><path d="M2 4h4M4 2v4" stroke="#333" /></svg>
      <svg viewBox="0 0 24 8" className="w-[24px] h-[8px] ml-[2px]">
        <circle cx="5" cy="4" r="3.800" fill="#e02020" />
        <path d="M18 0l4 4h-2v4h-4V4h-2z" fill="#49c13c" />
      </svg>
    </footer>
  );
}

export default function App() {
  return (
    <div className="h-screen flex flex-col bg-black pt-1 font-['Roboto','Noto_Sans',sans-serif] text-[#333] overflow-hidden">
      <div className="flex-1 min-h-0 flex flex-col bg-white ml-1 border-r-4 border-[#00aeff]">
        <Header />
        <Ribbon />
        <div className="flex-1 min-h-0 flex">
          <SideBar
            top="library"
            label="Parts Library"
            gap="mb-[24px]"
            icons={["find", "photo", "slice", "helpDoc", "thermal", "thermalDoc", "people", "target"]}
          />
          <main className="flex-1 min-w-0 flex flex-col">
            <DocTabs />
            <div className="relative flex-1 min-h-0 bg-[#fafcfb]">
              <Model />
              <PathFinder />
              <div className="absolute left-px bottom-[52px] text-[6px] leading-[7px]">
                <div className="w-[11px] h-[2px] bg-[#f6a65a] mb-px" />
                <p className="border border-[#c0cdd2] bg-[#edf2f2] pl-2 pr-[2px]">No top level part selected.</p>
              </div>
            </div>
            <PromptBar />
          </main>
          <SideBar top="qmark" label="Learn Solid Edge" gap="mb-[23px]" icons={["youtube", "facebook", "card", "clip"]} />
        </div>
        <StatusBar />
      </div>
      <div className="h-1 ml-1 flex bg-[#22343c]">
        <span className="w-[181px] ml-[26px] bg-[#f0f0f0]" />
        <span className="w-[24px] ml-[313px] bg-[#b8744a]" />
        <span className="w-[25px] ml-[157px] bg-[#46565d]" />
      </div>
    </div>
  );
}
